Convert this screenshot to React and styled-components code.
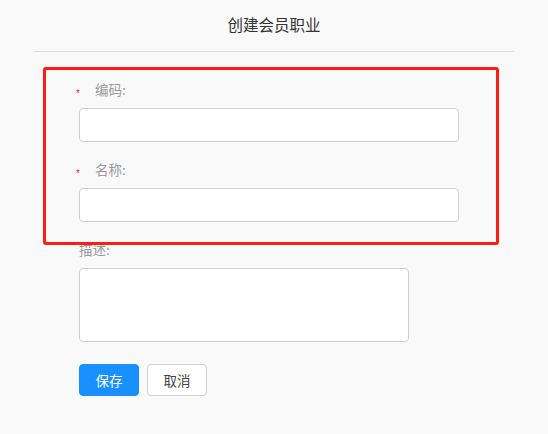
import React from 'react';
import styled, { createGlobalStyle } from 'styled-components';

const GlobalStyle = createGlobalStyle`
  html, body {
    margin: 0;
    padding: 0;
    background: #f9f9f9;
    font-family: "Noto Sans CJK SC", "Liberation Sans", sans-serif;
  }
`;

const Page = styled.div`
  width: 480px;
  margin: 0 auto;
`;

const Header = styled.div`
  height: 52px;
  border-bottom: 1px solid #dcdcdc;
  box-sizing: border-box;
  text-align: center;
  padding-top: 13px;
`;

const Title = styled.h1`
  margin: 0;
  font-size: 15.5px;
  font-weight: normal;
  line-height: 22px;
  color: #333;
`;

const Form = styled.div`
  position: relative;
  padding: 27px 0 0 45px;
`;

const Highlight = styled.div`
  position: absolute;
  left: 9px;
  top: 15px;
  width: 456px;
  height: 178px;
  box-sizing: border-box;
  border: 3px solid #ff1d14;
  border-radius: 3px;
  pointer-events: none;
`;

const Field = styled.div`
  margin-bottom: 17px;
`;

const LabelRow = styled.div`
  display: flex;
  align-items: center;
  height: 20px;
  margin-bottom: 9px;
`;

const Star = styled.span`
  margin-left: -3px;
  width: 19px;
  font-family: "Liberation Sans", sans-serif;
  font-size: 10px;
  color: #f5222d;
  position: relative;
  top: 4px;
`;

const Label = styled.label`
  font-size: 13.5px;
  line-height: 20px;
  color: #999;
`;

const Input = styled.input`
  display: block;
  width: ${p => p.$w}px;
  height: 34px;
  box-sizing: border-box;
  border: 1px solid #cfcfcf;
  border-radius: 4px;
  background: #fff;
  outline: none;
`;

const TextArea = styled.textarea`
  display: block;
  width: 330px;
  height: 74px;
  box-sizing: border-box;
  border: 1px solid #cfcfcf;
  border-radius: 4px;
  background: #fff;
  resize: none;
  outline: none;
`;

const Actions = styled.div`
  display: flex;
  gap: 8px;
  margin-top: 22px;
`;

const Button = styled.button`
  width: 60px;
  height: 32px;
  box-sizing: border-box;
  border-radius: 4px;
  font-family: "Noto Sans CJK SC", sans-serif;
  font-size: 13.5px;
  cursor: pointer;
  border: 1px solid ${p => (p.$primary ? '#1890ff' : '#cfcfcf')};
  background: ${p => (p.$primary ? '#1890ff' : '#fff')};
  color: ${p => (p.$primary ? '#fff' : '#444')};
`;

function App() {
  return (
    <>
      <GlobalStyle />
      <Page>
        <Header>
          <Title>创建会员职业</Title>
        </Header>
        <Form>
          <Field>
            <LabelRow>
              <Star>*</Star>
              <Label>编码:</Label>
            </LabelRow>
            <Input $w={380} />
          </Field>
          <Field>
            <LabelRow>
              <Star>*</Star>
              <Label>名称:</Label>
            </LabelRow>
            <Input $w={380} />
          </Field>
          <Field>
            <LabelRow>
              <Label>描述:</Label>
            </LabelRow>
            <TextArea />
          </Field>
          <Actions>
            <Button $primary>保存</Button>
            <Button>取消</Button>
          </Actions>
          <Highlight />
        </Form>
      </Page>
    </>
  );
}

export default App;
